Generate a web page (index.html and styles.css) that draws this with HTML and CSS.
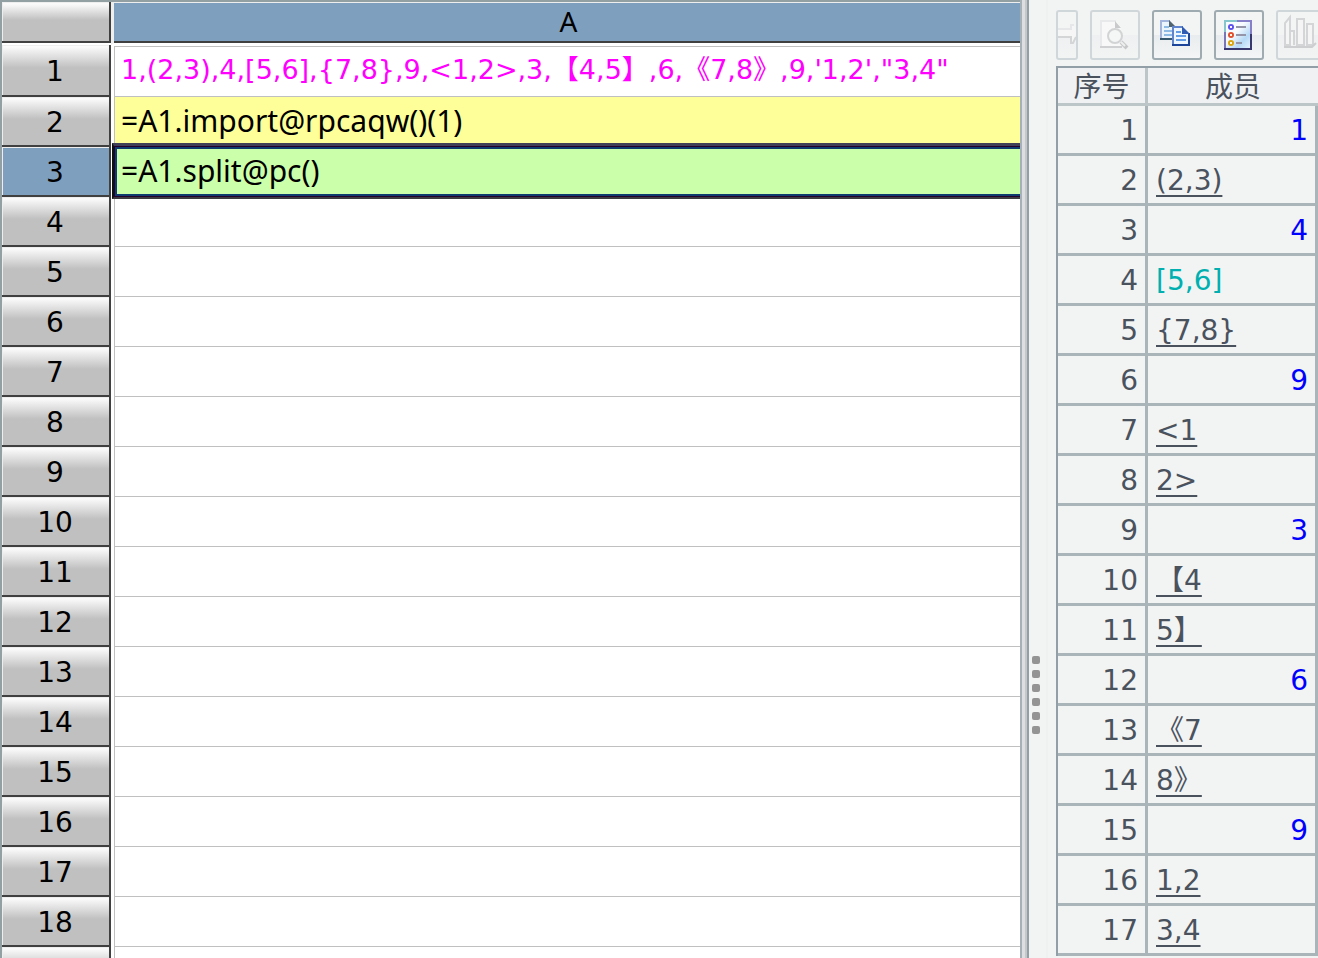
FILE: index.html
```
<!DOCTYPE html>
<html lang="zh-CN">
  <head>
    <meta charset="UTF-8" />
    <meta name="viewport" content="width=device-width, initial-scale=1.0" />
    <title>A3</title>
    <link rel="stylesheet" href="styles.css">
  </head>
  <body>
    <main class="sheet">
      <table class="grid">
        <thead>
          <tr><th class="corner"></th><th class="col-head">A</th></tr>
        </thead>
        <tbody>
          <tr class="first"><th>1</th><td class="const">1,(2,3),4,[5,6],{7,8},9,&lt;1,2&gt;,3,【4,5】,6,《7,8》,9,'1,2',"3,4"</td></tr>
          <tr><th>2</th><td class="formula done">=A1.import@rpcaqw()(1)</td></tr>
          <tr><th class="active">3</th><td class="formula selected">=A1.split@pc()</td></tr>
          <tr><th>4</th><td></td></tr>
          <tr><th>5</th><td></td></tr>
          <tr><th>6</th><td></td></tr>
          <tr><th>7</th><td></td></tr>
          <tr><th>8</th><td></td></tr>
          <tr><th>9</th><td></td></tr>
          <tr><th>10</th><td></td></tr>
          <tr><th>11</th><td></td></tr>
          <tr><th>12</th><td></td></tr>
          <tr><th>13</th><td></td></tr>
          <tr><th>14</th><td></td></tr>
          <tr><th>15</th><td></td></tr>
          <tr><th>16</th><td></td></tr>
          <tr><th>17</th><td></td></tr>
          <tr><th>18</th><td></td></tr>
          <tr><th></th><td></td></tr>
        </tbody>
      </table>
    </main>

    <div class="splitter">
      <i></i><i></i><i></i><i></i><i></i><i></i>
    </div>

    <aside class="panel">
      <div class="toolbar">
        <button class="tool cut" aria-label="下一个" disabled>
          <svg viewBox="2 2 18 46" width="18" height="46">
            <path d="M2 18h12v-4h3l3 6v10l-3 4h-2v-6H2z" fill="#f6f6f6" />
            <path d="M2 19h13v-4h3" fill="none" stroke="#e6e7e8" stroke-width="2" />
            <path d="M2 27h13v6h2l3-6" fill="none" stroke="#d3d5d6" stroke-width="2" />
          </svg>
        </button>
        <button class="tool" aria-label="查看" disabled>
          <svg viewBox="2 2 46 46" width="46" height="46">
            <path d="M11 11h15l5 6v20H11z" fill="#f8f8f8" />
            <path d="M11 37V11h15" fill="none" stroke="#e8e9ea" stroke-width="2" />
            <path d="M10 37h22" stroke="#cfd0d1" stroke-width="2" />
            <path d="M25 11l6 7h-6z" fill="#c9cacb" />
            <circle cx="25" cy="26" r="7" fill="#f5f6f6" stroke="#d2d3d4" stroke-width="2" />
            <path d="M31 32l6 6" stroke="#c6c7c8" stroke-width="4" />
            <path d="M31 32l4 4" stroke="#efefef" stroke-width="2" />
          </svg>
        </button>
        <button class="tool" aria-label="复制">
          <svg viewBox="2 2 46 46" width="46" height="46">
            <path d="M9 11h9l5 6v12H9z" fill="#eaf4fc" />
            <path d="M9 29V11h9" fill="none" stroke="#a3b4dc" stroke-width="2" />
            <path d="M8 29h13" stroke="#35586f" stroke-width="2" />
            <path d="M17 10l7 7h-7z" fill="#50636f" />
            <path d="M12 17h5M12 21h8M12 25h8" stroke="#8dbbe6" stroke-width="2" />
            <path d="M21 17h10l6 6v12H21z" fill="#eef7ff" />
            <path d="M21 35V17h10" fill="none" stroke="#5f83cc" stroke-width="2" />
            <path d="M20 35h17V23" fill="none" stroke="#1c4599" stroke-width="2" />
            <path d="M30 16l8 8h-8z" fill="#2f5cb2" />
            <path d="M24 22h5M24 26h10M24 30h10" stroke="#649de4" stroke-width="2" />
          </svg>
        </button>
        <button class="tool" aria-label="属性">
          <svg viewBox="2 2 46 46" width="46" height="46">
            <defs>
              <linearGradient id="sheetFill" x1="0" y1="0" x2="1" y2="1">
                <stop offset="0.4" stop-color="#f8fbff" />
                <stop offset="0.7" stop-color="#b5d9f6" />
                <stop offset="1" stop-color="#eaf5ff" />
              </linearGradient>
            </defs>
            <path d="M11 11h26v28H11z" fill="url(#sheetFill)" />
            <path d="M11 22V11h12" fill="none" stroke="#84c6cb" stroke-width="2" />
            <path d="M23 11h14v14" fill="none" stroke="#8580c8" stroke-width="2" />
            <path d="M11 22v17" stroke="#7b77b6" stroke-width="2" />
            <path d="M37 24v15H10" fill="none" stroke="#38386f" stroke-width="2" />
            <circle cx="17" cy="17" r="3" fill="#5c50ee" />
            <circle cx="17" cy="25" r="3" fill="#e2502f" />
            <circle cx="17" cy="33" r="3" fill="#dda50c" />
            <path d="M16 17h2M16 25h2M16 33h2" stroke="#fff6ea" stroke-width="2" />
            <path d="M22 17h10M22 25h10M22 33h6" stroke="#9495a8" stroke-width="2" />
          </svg>
        </button>
        <button class="tool" aria-label="图表" disabled>
          <svg viewBox="2 2 46 46" width="46" height="46">
            <path d="M9 35V13l5-6v28zM14 35V21h4v14M21 35V9h7v26zM31 35V14h6v21z" fill="#f5f5f5" stroke="#d4d5d6" stroke-width="2" />
            <path d="M8 37h28l4-4" fill="none" stroke="#cdcecf" stroke-width="2" />
          </svg>
        </button>
      </div>

      <table class="members">
        <thead>
          <tr><th class="index">序号</th><th>成员</th></tr>
        </thead>
        <tbody>
          <tr><td>1</td><td class="num">1</td></tr>
          <tr><td>2</td><td class="str"><span>(2,3)</span></td></tr>
          <tr><td>3</td><td class="num">4</td></tr>
          <tr><td>4</td><td class="seq">[5,6]</td></tr>
          <tr><td>5</td><td class="str"><span>{7,8}</span></td></tr>
          <tr><td>6</td><td class="num">9</td></tr>
          <tr><td>7</td><td class="str"><span>&lt;1</span></td></tr>
          <tr><td>8</td><td class="str"><span>2&gt;</span></td></tr>
          <tr><td>9</td><td class="num">3</td></tr>
          <tr><td>10</td><td class="str"><span>【4</span></td></tr>
          <tr><td>11</td><td class="str"><span>5】</span></td></tr>
          <tr><td>12</td><td class="num">6</td></tr>
          <tr><td>13</td><td class="str"><span>《7</span></td></tr>
          <tr><td>14</td><td class="str"><span>8》</span></td></tr>
          <tr><td>15</td><td class="num">9</td></tr>
          <tr><td>16</td><td class="str"><span>1,2</span></td></tr>
          <tr><td>17</td><td class="str"><span>3,4</span></td></tr>
        </tbody>
      </table>
    </aside>
  </body>
</html>
```
FILE: styles.css
```
* {
  box-sizing: border-box;
}

body {
  margin: 0;
  height: 100vh;
  display: flex;
  overflow: hidden;
  background: #f2f4f3;
  font-family: 'DejaVu Sans', 'Noto Sans CJK SC', sans-serif;
  font-size: 28px;
  line-height: 32px;
}

table {
  width: 100%;
  table-layout: fixed;
  border-collapse: separate;
  border-spacing: 0;
}

th {
  font-weight: normal;
}

th,
td {
  padding: 0;
  white-space: nowrap;
}

/* spreadsheet */
.sheet {
  flex: 1;
  min-width: 0;
  overflow: hidden;
  background: #fff;
  border-top: 2px solid #929fa3;
  border-left: 2px solid #929fa3;
}

.grid th {
  height: 50px;
  padding: 2px 3px 0 0;
  background: linear-gradient(#fafafa 2px, #f4f4f4 4px, #c0c0c0 44%);
  box-shadow: inset -2px -2px #404040, inset 1px 1px #eee;
}

.grid .corner {
  width: 109px;
}

.grid thead th {
  height: 43px;
  border-bottom: 2px solid #fff;
}

.grid .col-head {
  padding: 0 0 3px 3px;
  background: #7f9fbf;
  border-left: 3px solid #eee;
  box-shadow: inset 0 -2px #404040, inset 0 1px #eee;
  font-family: 'Noto Sans', sans-serif;
}

.grid th.active {
  background: #7f9fbf;
}

.grid td {
  height: 50px;
  padding-left: 7px;
  padding-bottom: 3px;
  border-left: 3px solid #fff;
  box-shadow: inset 1px -1px #c0c0c0;
}

.grid .first th,
.grid .first td {
  height: 52px;
}

.grid .first td {
  border-top: 1px solid #fff;
  box-shadow: inset 1px -1px #c0c0c0, inset 0 1px #c0c0c0;
}

.grid .const {
  color: #f0f;
  font-size: 27px;
}

.grid .formula {
  font-family: 'Noto Sans', sans-serif;
  font-size: 30px;
}

.grid .done {
  background: #ffff99;
}

.grid .selected {
  position: relative;
  background: #ccffaa;
}

.selected::after {
  content: '';
  position: absolute;
  inset: -4px -6px -2px -2px;
  border: 2px solid #3c3c40;
  border-top: 3px solid #404058;
  border-left-color: #101010;
  box-shadow: inset 0 0 0 1px #25002c, inset 0 0 0 3px #0f3c6e;
}

/* divider between the sheet and the result panel */
.splitter {
  width: 36px;
  padding: 656px 0 0 12px;
  display: flex;
  flex-direction: column;
  gap: 6px;
  background: linear-gradient(
    to right,
    #a5b1b7 2px,
    #dcdee2 2px 5px,
    #c6c7c8 5px 7px,
    #929fa6 7px 9px,
    #f2f4f3 9px 26px,
    #eff1f0 26px 28px,
    #f2f4f3 28px
  );
}

.splitter i {
  width: 8px;
  height: 8px;
  flex: none;
  border-radius: 2px;
  background: #949494;
}

/* result panel */
.panel {
  width: 262px;
  display: flex;
  flex-direction: column;
  overflow: hidden;
}

.toolbar {
  display: flex;
  gap: 12px;
  padding: 10px 0 6px;
  overflow: hidden;
}

.tool {
  flex: none;
  width: 50px;
  height: 50px;
  padding: 0;
  border: 2px solid #9eabb1;
  border-radius: 3px;
  background: linear-gradient(#f3f5f5 50%, #e9ecee 50%, #f3f5f6);
}

.tool:disabled {
  border-color: #d0d7da;
  background: linear-gradient(#f3f5f5 50%, #eef0f1 50%, #f2f4f4);
}

.tool svg {
  display: block;
}

.cut {
  width: 22px;
}

.members {
  color: #4a525e;
  border-top: 2px solid #929fa6;
  border-left: 2px solid #929fa6;
}

.members th {
  height: 38px;
  padding-top: 3px;
  line-height: 29px;
  background: #f0f1f3;
  border-bottom: 3px solid #bcc6c9;
}

.members th.index {
  width: 90px;
  border-right: 3px solid #bcc6c9;
}

.members td {
  height: 50px;
  padding: 2px 7px 0 8px;
  border-right: 3px solid #a9b5b9;
  border-bottom: 3px solid #a9b5b9;
  text-align: right;
}

.members .num {
  color: #00f;
}

.members .seq {
  color: #00b0b0;
  text-align: left;
}

.members .str {
  text-align: left;
}

.str span {
  text-decoration: underline 2px;
  text-underline-offset: 5px;
  text-decoration-skip-ink: none;
}
```
